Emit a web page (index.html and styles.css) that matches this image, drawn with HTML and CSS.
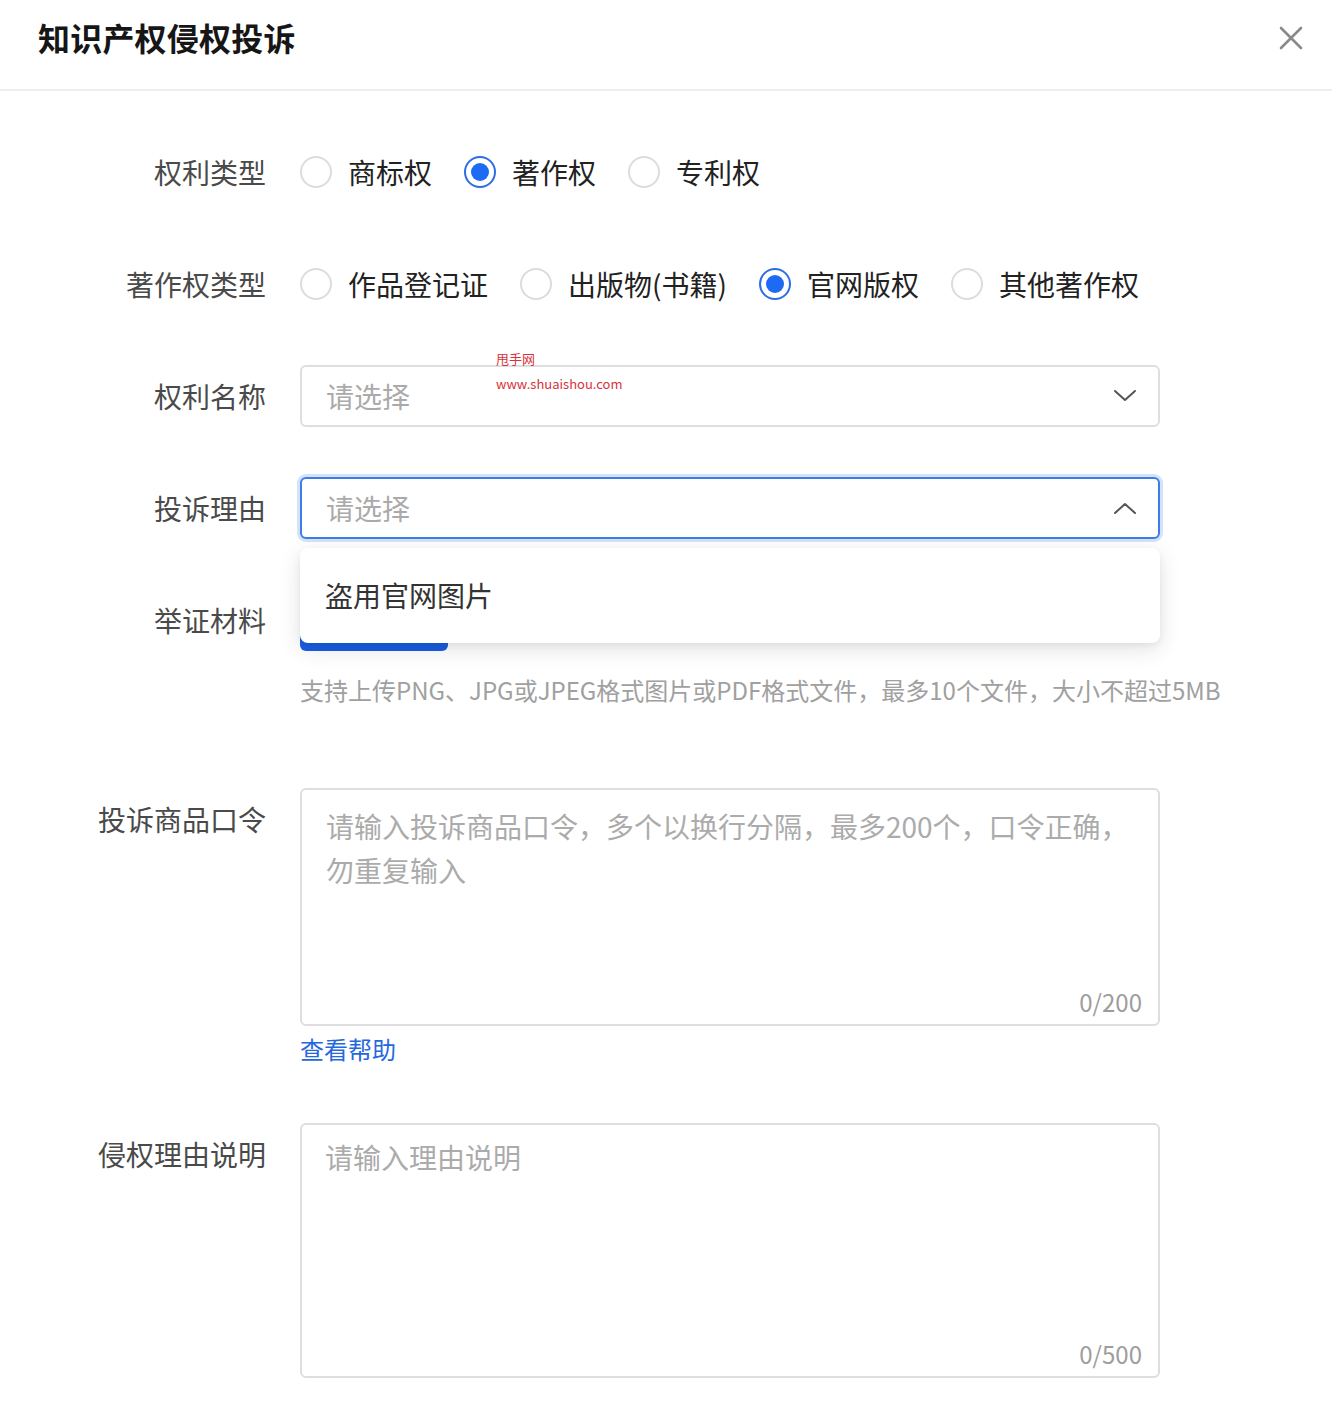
FILE: index.html
```html
<!DOCTYPE html>
<html lang="zh-CN">
<head>
<meta charset="utf-8">
<title>知识产权侵权投诉</title>
<link rel="stylesheet" href="styles.css">
</head>
<body>
<div class="dialog">
  <header class="header">
    <h1 class="title">知识产权侵权投诉</h1>
    <button class="close" aria-label="关闭">
      <svg width="26" height="26" viewBox="0 0 26 26"><path d="M3 3L23 23M23 3L3 23" stroke="#8a8a8a" stroke-width="2.6" stroke-linecap="round" fill="none"/></svg>
    </button>
  </header>

  <form class="form">
    <div class="row">
      <label class="label">权利类型</label>
      <div class="control radios">
        <span class="radio"><i class="dot"></i>商标权</span>
        <span class="radio checked"><i class="dot"></i>著作权</span>
        <span class="radio"><i class="dot"></i>专利权</span>
      </div>
    </div>

    <div class="row">
      <label class="label">著作权类型</label>
      <div class="control radios">
        <span class="radio"><i class="dot"></i>作品登记证</span>
        <span class="radio"><i class="dot"></i>出版物(书籍)</span>
        <span class="radio checked"><i class="dot"></i>官网版权</span>
        <span class="radio"><i class="dot"></i>其他著作权</span>
      </div>
    </div>

    <div class="row">
      <label class="label">权利名称</label>
      <div class="control">
        <div class="select">
          <span class="placeholder">请选择</span>
          <svg class="chev" width="24" height="14" viewBox="0 0 24 14"><path d="M2 2L12 11L22 2" stroke="#555" stroke-width="2" fill="none" stroke-linecap="round" stroke-linejoin="round"/></svg>
        </div>
      </div>
    </div>

    <div class="row">
      <label class="label">投诉理由</label>
      <div class="control dropwrap">
        <div class="select focused">
          <span class="placeholder">请选择</span>
          <svg class="chev" width="24" height="14" viewBox="0 0 24 14"><path d="M2 12L12 3L22 12" stroke="#555" stroke-width="2" fill="none" stroke-linecap="round" stroke-linejoin="round"/></svg>
        </div>
        <div class="dropdown">
          <div class="option">盗用官网图片</div>
        </div>
      </div>
    </div>

    <div class="row row-upload">
      <label class="label">举证材料</label>
      <div class="control">
        <button type="button" class="upload" aria-label="上传文件"></button>
        <p class="hint">支持上传PNG、JPG或JPEG格式图片或PDF格式文件，最多10个文件，大小不超过5MB</p>
      </div>
    </div>

    <div class="row row-text row-first">
      <label class="label">投诉商品口令</label>
      <div class="control">
        <div class="area area-1">
          <textarea placeholder="请输入投诉商品口令，多个以换行分隔，最多200个，口令正确，勿重复输入"></textarea>
          <span class="count">0/200</span>
        </div>
        <a class="help" href="#">查看帮助</a>
      </div>
    </div>

    <div class="row row-text">
      <label class="label">侵权理由说明</label>
      <div class="control">
        <div class="area area-2">
          <textarea placeholder="请输入理由说明"></textarea>
          <span class="count">0/500</span>
        </div>
      </div>
    </div>
  </form>

  <div class="watermark">
    <span class="wm-1">甩手网</span>
    <span class="wm-2">www.shuaishou.com</span>
  </div>
</div>
</body>
</html>
```

FILE: styles.css
```css
* { box-sizing: border-box; }

html, body {
  margin: 0;
  padding: 0;
  background: #fff;
}

body {
  font-family: "Noto Sans CJK SC", "Noto Sans", sans-serif;
  color: #222;
  overflow: hidden;
}

.dialog {
  position: relative;
  width: 1332px;
  min-height: 1424px;
}

.header {
  height: 91px;
  border-bottom: 2px solid #eeeeee;
  display: flex;
  align-items: flex-start;
  justify-content: space-between;
  padding: 0 28px 0 38px;
}

.title {
  margin: 0;
  font-size: 32px;
  font-weight: 700;
  line-height: 74px;
  color: #161616;
  letter-spacing: 0.2px;
}

.close {
  border: 0;
  background: none;
  padding: 0;
  margin-top: 25px;
  width: 26px;
  height: 26px;
  cursor: pointer;
}

.form {
  padding-top: 50px;
}

.row {
  display: flex;
  align-items: flex-start;
  gap: 34px;
  margin-bottom: 50px;
}

.label {
  flex: 0 0 266px;
  text-align: right;
  font-size: 28px;
  line-height: 62px;
  color: #4a4a4a;
}

.control {
  flex: 0 0 auto;
}

.radios {
  display: flex;
  align-items: center;
  height: 62px;
  gap: 32px;
}

.radio {
  display: inline-flex;
  align-items: center;
  gap: 16px;
  font-size: 28px;
  color: #222;
  line-height: 62px;
}

.dot {
  width: 32px;
  height: 32px;
  border-radius: 50%;
  border: 2px solid #dcdcdc;
  display: inline-flex;
  align-items: center;
  justify-content: center;
}

.radio.checked .dot {
  border-color: #2b6de4;
}

.radio.checked .dot::after {
  content: "";
  width: 18px;
  height: 18px;
  border-radius: 50%;
  background: #1d6af5;
}

.select {
  width: 860px;
  height: 62px;
  border: 2px solid #dedede;
  border-radius: 6px;
  display: flex;
  align-items: center;
  justify-content: space-between;
  padding: 0 21px 0 24px;
  background: #fff;
}

.select.focused {
  border-color: #3c7de6;
  box-shadow: 0 0 0 3px rgba(60, 125, 230, 0.22);
}

.placeholder {
  font-size: 28px;
  color: #aaaaaa;
}

.dropwrap {
  position: relative;
}

.dropdown {
  position: absolute;
  left: 0;
  top: 71px;
  width: 860px;
  height: 95px;
  background: #fff;
  border-radius: 8px;
  box-shadow: 0 6px 22px rgba(0, 0, 0, 0.12), 0 2px 6px rgba(0, 0, 0, 0.05);
  display: flex;
  align-items: center;
  padding: 0 25px;
  z-index: 5;
}

.option {
  font-size: 28px;
  color: #333;
  margin-top: -2px;
}

.upload {
  display: block;
  width: 148px;
  height: 62px;
  border: 0;
  border-radius: 6px;
  background: #1a5ee2;
}

.hint {
  margin: 22px 0 0;
  font-size: 24px;
  line-height: 34px;
  color: #a0a0a0;
  white-space: nowrap;
}

.row-upload {
  margin-bottom: 81px;
}

.area {
  position: relative;
  width: 860px;
}

.area textarea {
  display: block;
  width: 860px;
  border: 2px solid #dedede;
  border-radius: 6px;
  resize: none;
  font-family: inherit;
  font-size: 28px;
  line-height: 44px;
  color: #333;
  outline: none;
  background: #fff;
  margin: 0;
}

.area-1 textarea {
  height: 238px;
  padding: 14px 20px 0 24px;
}

.area-2 textarea {
  height: 255px;
  padding: 10px 20px 0 23px;
}

.area textarea::placeholder {
  color: #ababab;
}

.count {
  position: absolute;
  right: 18px;
  bottom: 9px;
  font-size: 24px;
  line-height: 30px;
  color: #9d9d9d;
}

.help {
  display: inline-block;
  margin-top: 6px;
  font-size: 24px;
  line-height: 34px;
  color: #2568de;
  text-decoration: none;
}

.row-first {
  margin-bottom: 57px;
}

.watermark {
  position: absolute;
  left: 496px;
  top: 350px;
  display: flex;
  flex-direction: column;
  color: #d6323a;
  font-size: 13px;
  line-height: 18px;
  pointer-events: none;
}

.wm-2 {
  margin-top: 7px;
}
```
